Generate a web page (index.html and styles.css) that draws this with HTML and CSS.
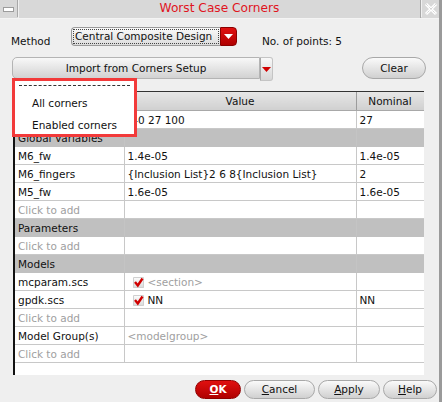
FILE: index.html
```html
<!DOCTYPE html>
<html>
<head>
<meta charset="utf-8">
<link rel="stylesheet" href="styles.css">
</head>
<body>
<div class="win">
  <div class="titlebar">
    <div class="tb-min"><span class="min-icon"></span></div>
    <div class="tb-title">Worst Case Corners</div>
    <div class="tb-close">
      <svg width="14" height="14" viewBox="0 0 14 14"><path d="M2 2 L12 12 M12 2 L2 12" stroke="#fff" stroke-width="3"/><path d="M2 2 L12 12 M12 2 L2 12" stroke="#c4c4c4" stroke-width="1" stroke-dasharray="1 1"/></svg>
    </div>
  </div>
  <div class="body">
    <div class="method-row">
      <span class="lbl">Method</span>
      <div class="combo">
        <span class="combo-text"><span class="focus">Central Composite Design</span></span>
        <span class="combo-arrow"><svg width="9" height="5" viewBox="0 0 9 5"><path d="M0 0 H9 L4.5 5 Z" fill="#fff"/></svg></span>
      </div>
      <span class="npts">No. of points: 5</span>
    </div>
    <div class="import-row">
      <div class="import-btn">Import from Corners Setup</div>
      <div class="import-arrow"><svg width="9" height="5" viewBox="0 0 9 5"><path d="M0 0 H9 L4.5 5 Z" fill="#d00000"/></svg></div>
      <div class="clear-btn">Clear</div>
    </div>
    <div class="table-wrap">
      <table class="grid">
        <colgroup><col class="c1"><col class="c2"><col class="c3"></colgroup>
        <thead>
          <tr><th></th><th>Value</th><th>Nominal</th></tr>
        </thead>
        <tbody>
          <tr><td>Temperature</td><td>-40 27 100</td><td>27</td></tr>
          <tr class="sec"><td>Global Variables</td><td></td><td></td></tr>
          <tr><td>M6_fw</td><td>1.4e-05</td><td>1.4e-05</td></tr>
          <tr><td>M6_fingers</td><td>{Inclusion List}2 6 8{Inclusion List}</td><td>2</td></tr>
          <tr><td>M5_fw</td><td>1.6e-05</td><td>1.6e-05</td></tr>
          <tr><td class="hint">Click to add</td><td></td><td></td></tr>
          <tr class="sec"><td>Parameters</td><td></td><td></td></tr>
          <tr><td class="hint">Click to add</td><td></td><td></td></tr>
          <tr class="sec"><td>Models</td><td></td><td></td></tr>
          <tr><td>mcparam.scs</td><td><span class="chk"><svg width="11" height="11" viewBox="0 0 11 11"><path d="M2 5 L4.8 8.5 L9.5 1.5" fill="none" stroke="#d00000" stroke-width="2.4"/></svg></span><span class="hint">&lt;section&gt;</span></td><td></td></tr>
          <tr><td>gpdk.scs</td><td><span class="chk"><svg width="11" height="11" viewBox="0 0 11 11"><path d="M2 5 L4.8 8.5 L9.5 1.5" fill="none" stroke="#d00000" stroke-width="2.4"/></svg></span>NN</td><td>NN</td></tr>
          <tr><td class="hint">Click to add</td><td></td><td></td></tr>
          <tr><td>Model Group(s)</td><td class="hint">&lt;modelgroup&gt;</td><td></td></tr>
          <tr><td class="hint">Click to add</td><td></td><td></td></tr>
        </tbody>
      </table>
    </div>
    <div class="popup">
      <div class="dash"></div>
      <div class="item">All corners</div>
      <div class="item">Enabled corners</div>
    </div>
    <div class="buttons">
      <div class="btn ok"><u>O</u>K</div>
      <div class="btn cancel"><u>C</u>ancel</div>
      <div class="btn apply"><u>A</u>pply</div>
      <div class="btn help"><u>H</u>elp</div>
    </div>
  </div>
</div>
</body>
</html>
```

FILE: styles.css
```css
html, body {
  margin: 0;
  padding: 0;
  background: #efefef;
}
body {
  font-family: "DejaVu Sans", "Liberation Sans", sans-serif;
  font-size: 10.5px;
  color: #111;
}
.win {
  width: 439px;
  height: 402px;
  border-right: 3px solid #9a9a9a;
  background: #efefef;
  overflow: hidden;
}
.titlebar {
  display: flex;
  height: 18px;
  background: #d8d8d8;
  border-bottom: 1px solid #f4f4f4;
}
.tb-min {
  width: 17px;
  height: 17px;
  border-right: 1px solid #a8a8a8;
  display: flex;
  align-items: center;
  justify-content: center;
}
.min-icon {
  width: 9px;
  height: 3px;
  background: #fff;
  border: 1px solid #9c9c9c;
  margin-top: 1px;
}
.tb-title {
  flex: 1;
  text-align: center;
  color: #e0141e;
  font-size: 12.2px;
  line-height: 17px;
  border-left: 1px solid #f0f0f0;
  border-right: 1px solid #a8a8a8;
}
.tb-close {
  width: 17px;
  height: 17px;
  display: flex;
  align-items: center;
  justify-content: center;
  border-left: 1px solid #f0f0f0;
}
.body {
  position: relative;
  padding-top: 8px;
}
.method-row {
  display: flex;
  align-items: center;
  height: 19px;
}
.lbl {
  margin-left: 11px;
  width: 60px;
  margin-top: 8px;
}
.combo {
  display: flex;
  width: 166px;
  height: 19px;
}
.combo-text {
  flex: 1;
  border: 1px solid #9a9a9a;
  border-right: none;
  border-radius: 4px 0 0 4px;
  background: linear-gradient(#fafafa, #dcdcdc);
  padding: 1px;
  display: flex;
}
.focus {
  flex: 1;
  border: 1px dotted #444;
  line-height: 13px;
  padding-left: 1px;
  white-space: nowrap;
}
.combo-arrow {
  width: 15px;
  border-radius: 0 4px 4px 0;
  background: linear-gradient(#e01010, #b00000);
  border: 1px solid #8a0000;
  display: flex;
  align-items: center;
  justify-content: center;
}
.npts {
  margin-left: 25px;
  margin-top: 8px;
}
.import-row {
  display: flex;
  height: 22px;
  margin-top: 11px;
}
.import-btn {
  margin-left: 12px;
  width: 246px;
  border: 1px solid #b4b4b4;
  border-radius: 5px 0 0 5px;
  background: linear-gradient(#f8f8f8, #d2d2d2);
  text-align: center;
  line-height: 20px;
}
.import-arrow {
  height: 24px;
  border: 1px solid #c4c4c4;
  border-left: 1px solid #a8a8a8;
  border-radius: 0 3px 3px 0;
  background: linear-gradient(#f8f8f8, #d6d6d6);
  display: flex;
  align-items: center;
  justify-content: center;
  box-sizing: border-box;
  width: 13px;
}
.clear-btn {
  margin-left: 89px;
  width: 62px;
  border: 1px solid #a8a8a8;
  border-radius: 11px;
  background: linear-gradient(#fafafa, #d0d0d0);
  text-align: center;
  line-height: 20px;
}
.table-wrap {
  margin-top: 12px;
  margin-left: 13px;
  width: 411px;
  height: 284px;
  box-sizing: border-box;
  border-left: 2px solid #111;
  border-top: 1px solid #333;
  background: #fff;
  overflow: hidden;
}
.grid {
  border-collapse: collapse;
  table-layout: fixed;
  width: 409px;
}
.c1 { width: 109px; }
.c2 { width: 232px; }
.c3 { width: 68px; }
.grid th {
  height: 18px;
  padding: 0;
  font-weight: normal;
  background: linear-gradient(#e6e6e6, #d0d0d0);
  border-right: 1px solid #9c9c9c;
  border-bottom: 1px solid #a8a8a8;
  text-align: center;
}
.grid td {
  height: 17px;
  padding: 0 0 0 3px;
  border-right: 1px solid #c8c8c8;
  border-bottom: 1px solid #c8c8c8;
  white-space: nowrap;
  overflow: hidden;
}
.grid tr.sec td {
  background: #c0c0c0;
  border-right-color: #c4c4c4;
  border-bottom-color: #c0c0c0;
}
.hint {
  color: #a0a0a0;
}
.chk {
  display: inline-block;
  width: 11px;
  height: 11px;
  margin: 0 4px 0 5px;
  vertical-align: -2px;
  background: linear-gradient(#ffffff, #d8d8d8);
  border-radius: 1px;
  box-shadow: inset 0 0 0 1px #d0d0d0;
}
.chk svg {
  display: block;
}
.popup {
  position: absolute;
  left: 12px;
  top: 59px;
  width: 119px;
  height: 53px;
  background: #fff;
  border: 3px solid #f23a3a;
  overflow: hidden;
}
.dash {
  margin: 4px 4px 0 4px;
  border-top: 1px dashed #333;
}
.item {
  padding-left: 17px;
  line-height: 22px;
}
.dash + .item {
  margin-top: 6px;
}
.buttons {
  display: flex;
  gap: 3px;
  margin-top: 5px;
  margin-left: 195px;
  height: 19px;
}
.btn {
  border: 1px solid #a8a8a8;
  border-radius: 10px;
  background: linear-gradient(#fafafa, #d0d0d0);
  text-align: center;
  line-height: 17px;
  box-sizing: border-box;
}
.ok {
  width: 46px;
  background: linear-gradient(#e01010, #b00000);
  border-color: #900000;
  color: #fff;
  font-weight: bold;
}
.cancel { width: 71px; }
.apply { width: 62px; }
.help { width: 54px; }
```
